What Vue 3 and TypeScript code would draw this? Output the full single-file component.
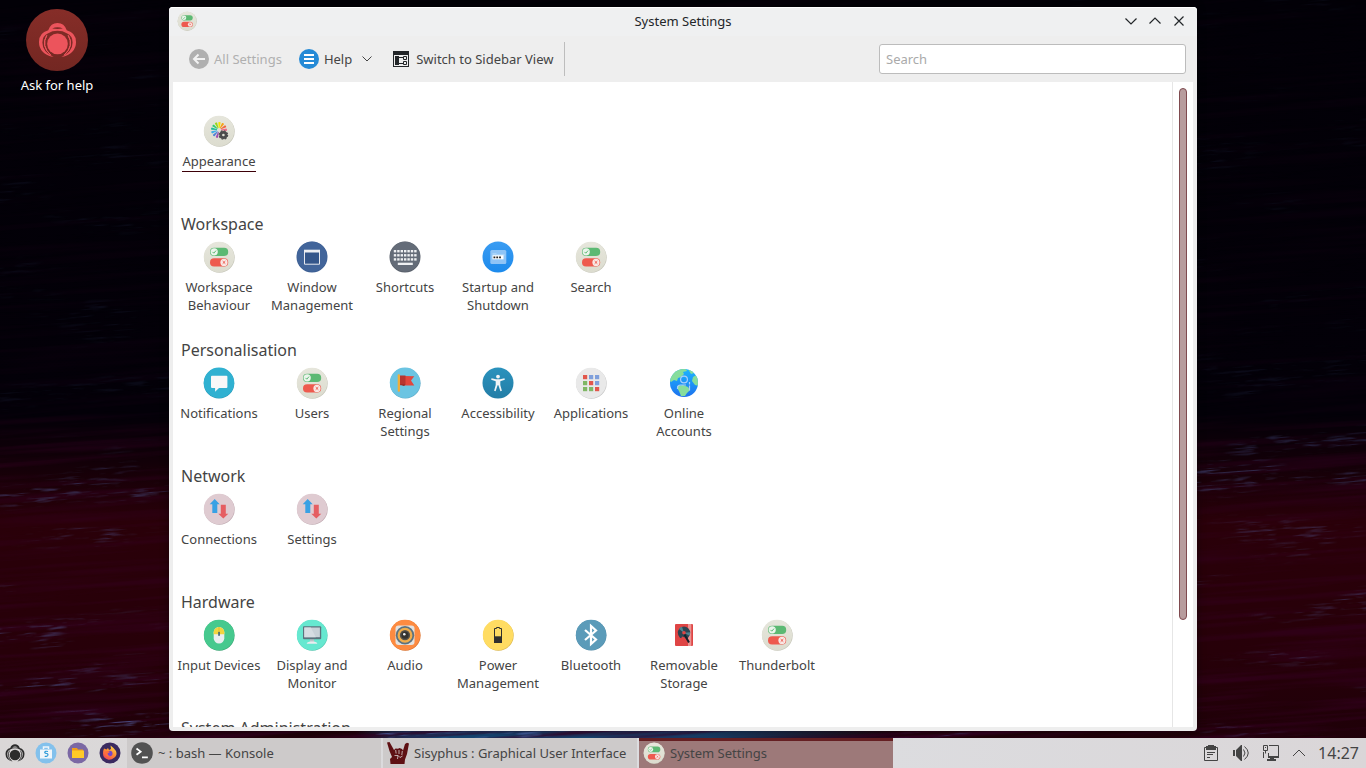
<script setup lang="ts">
interface Item {
  label: string
  icon: string
  current?: boolean
}
interface Section {
  title: string
  items: Item[]
}

const sections: Section[] = [
  { title: '', items: [{ label: 'Appearance', icon: 'appearance', current: true }] },
  {
    title: 'Workspace',
    items: [
      { label: 'Workspace Behaviour', icon: 'toggles' },
      { label: 'Window Management', icon: 'window' },
      { label: 'Shortcuts', icon: 'keyboard' },
      { label: 'Startup and Shutdown', icon: 'startup' },
      { label: 'Search', icon: 'toggles' },
    ],
  },
  {
    title: 'Personalisation',
    items: [
      { label: 'Notifications', icon: 'bubble' },
      { label: 'Users', icon: 'toggles' },
      { label: 'Regional Settings', icon: 'flag' },
      { label: 'Accessibility', icon: 'person' },
      { label: 'Applications', icon: 'apps' },
      { label: 'Online Accounts', icon: 'globe' },
    ],
  },
  {
    title: 'Network',
    items: [
      { label: 'Connections', icon: 'arrows' },
      { label: 'Settings', icon: 'arrows' },
    ],
  },
  {
    title: 'Hardware',
    items: [
      { label: 'Input Devices', icon: 'mouse' },
      { label: 'Display and Monitor', icon: 'monitor' },
      { label: 'Audio', icon: 'audio' },
      { label: 'Power Management', icon: 'battery' },
      { label: 'Bluetooth', icon: 'bluetooth' },
      { label: 'Removable Storage', icon: 'disk' },
      { label: 'Thunderbolt', icon: 'toggles' },
    ],
  },
  { title: 'System Administration', items: [] },
]

const tasks = [
  { label: '~ : bash — Konsole', icon: 'konsole', active: false },
  { label: 'Sisyphus : Graphical User Interface', icon: 'horns', active: false },
  { label: 'System Settings', icon: 'toggles', active: true },
]

const fan = ['#a04bb0', '#4f7fd8', '#3daee9', '#1abc9c', '#2ecc71', '#9bd61b', '#f4e400', '#f6a31b', '#f0663f', '#ee6a8a']
const keyColumns = [0, 1, 2, 3, 4, 5, 6]
const appColors = ['#e2574c', '#7f9fdb', '#7f9fdb', '#7fb765', '#e2574c', '#7f9fdb', '#7fb765', '#7fb765', '#e2574c']
</script>

<template>
  <svg class="defs" width="0" height="0" aria-hidden="true">
    <defs>
      <linearGradient id="g-beige" x1="0" y1="0" x2="0" y2="1"><stop offset="0" stop-color="#e6e6dc" /><stop offset="1" stop-color="#dcdccf" /></linearGradient>
      <linearGradient id="g-globe" x1="0" y1="0" x2="0" y2="1"><stop offset="0" stop-color="#1cb4ff" /><stop offset="1" stop-color="#1d72ee" /></linearGradient>
      <linearGradient id="g-startup" x1="0" y1="0" x2="0" y2="1"><stop offset="0" stop-color="#3a9cf2" /><stop offset="1" stop-color="#1c8aec" /></linearGradient>
      <linearGradient id="g-person" x1="0" y1="0" x2="0" y2="1"><stop offset="0" stop-color="#2a92bd" /><stop offset="1" stop-color="#237da6" /></linearGradient>
      <linearGradient id="g-fox" x1="0.8" y1="0" x2="0.2" y2="1"><stop offset="0" stop-color="#ffde4a" /><stop offset="0.5" stop-color="#ff8b32" /><stop offset="1" stop-color="#f2405c" /></linearGradient>
      <clipPath id="c-globe"><circle cx="16" cy="16" r="14" /></clipPath>
    </defs>

    <symbol id="i-toggles" viewBox="0 0 32 32">
      <circle cx="16.4" cy="16.5" r="15.3" fill="#c7c7ba" /><circle cx="16" cy="16" r="15.2" fill="url(#g-beige)" />
      <rect x="7" y="6.7" width="18.2" height="8.3" rx="4.1" fill="#5cb973" />
      <circle cx="11.2" cy="10.8" r="3.6" fill="#ecf5ec" /><path d="M9.5 10.9l1.3 1.3 2.2-2.6" fill="none" stroke="#5cb973" />
      <rect x="7" y="17.3" width="18.2" height="8.3" rx="4.1" fill="#ee5a4e" />
      <circle cx="21" cy="21.4" r="3.6" fill="#f9e8e5" /><path d="M19.7 20.1l2.6 2.6m0-2.6l-2.6 2.6" fill="none" stroke="#ee5a4e" />
    </symbol>

    <symbol id="i-appearance" viewBox="0 0 32 32">
      <circle cx="16.4" cy="16.5" r="15.3" fill="#c7c7ba" /><circle cx="16" cy="16" r="15.2" fill="url(#g-beige)" />
      <path v-for="(c, i) in fan" :key="i" d="M15.6 13L14.8 7.4Q16 6.4 17.2 7.4L16.4 13Z" :fill="c" :transform="`rotate(${i * 28 - 164} 16 15)`" />
      <circle cx="20.4" cy="20" r="2.7" fill="none" stroke="#4d4d4d" stroke-width="2.8" />
      <circle cx="20.4" cy="20" r="4.2" fill="none" stroke="#4d4d4d" stroke-width="1.2" stroke-dasharray="1.8 1.5" />
    </symbol>

    <symbol id="i-window" viewBox="0 0 32 32">
      <circle cx="16" cy="16" r="15.5" fill="#3d5f93" /><circle cx="16" cy="15.7" r="15" fill="#42659a" />
      <path d="M8.5 9.5h15v13.7h-15z" fill="#34568a" stroke="#e6e9ef" /><path d="M8 8.7h16v2.8H8z" fill="#eceef2" />
    </symbol>

    <symbol id="i-keyboard" viewBox="0 0 32 32">
      <circle cx="16" cy="16" r="15.5" fill="#59606b" /><circle cx="16" cy="15.7" r="15" fill="#646c78" />
      <g fill="#eef0f2">
        <g v-for="k in keyColumns" :key="k">
          <rect :x="4.8 + k * 3.4" y="9" width="2.4" height="2.4" /><rect :x="4.8 + k * 3.4" y="13.1" width="2.4" height="2.4" /><rect :x="4.8 + k * 3.4" y="17.2" width="2.4" height="2.4" />
        </g>
        <rect x="8.8" y="21.7" width="15" height="2.3" />
      </g>
    </symbol>

    <symbol id="i-startup" viewBox="0 0 32 32">
      <circle cx="16" cy="16" r="15.5" fill="url(#g-startup)" />
      <rect x="8.3" y="9" width="16" height="14" rx="1.5" fill="#8fc4f6" /><path d="M10.5 12h4v1h8v2h-12z" fill="#a9d3f8" />
      <rect x="10.5" y="14.3" width="11" height="4" fill="#fff" /><path d="M11.5 15.5h1.8v1.8h-1.8zm2.8 0h1.8v1.8h-1.8zm2.8 0h1.8v1.8h-1.8z" fill="#222" />
    </symbol>

    <symbol id="i-bubble" viewBox="0 0 32 32">
      <circle cx="16" cy="16.2" r="15.3" fill="#2795b3" /><circle cx="16" cy="15.8" r="15.2" fill="#30b1d1" />
      <path d="M9 8.7h14.4q1 0 1 1V20q0 1-1 1H16l-3.9 3.7V21H9q-1 0-1-1V9.7q0-1 1-1z" fill="#f8f8f8" />
    </symbol>

    <symbol id="i-flag" viewBox="0 0 32 32">
      <circle cx="16.3" cy="16.3" r="15.3" fill="#5eaac7" /><circle cx="16" cy="15.8" r="15.2" fill="#6bc4e2" />
      <path d="M15 9l10.300.2-3.300 4.300 3.300 5H15z" fill="#e2463d" /><path d="M11 8.6h5.500v8.900L15 18.300H11z" fill="#b8342f" />
      <path d="M16.5 17.5H11l4 1.500z" fill="#8d2723" /><rect x="8.7" y="7.3" width="2.3" height="17.500" rx="1" fill="#efae3a" />
    </symbol>

    <symbol id="i-person" viewBox="0 0 32 32">
      <circle cx="16" cy="16" r="15.5" fill="url(#g-person)" /><circle cx="16" cy="9.6" r="1.9" fill="#f1f4f6" />
      <path d="M9.5 11.300l4.500 1h4l4.500-1 .3 1.500-4.500 1.500v3.700l1.600 5.700-1.500.5-2-6h-.8l-2 6-1.500-.5 1.600-5.700v-3.700l-4.500-1.500z" fill="#f1f4f6" />
    </symbol>

    <symbol id="i-apps" viewBox="0 0 32 32">
      <circle cx="16.4" cy="16.5" r="15.3" fill="#c9c9c9" /><circle cx="16" cy="15.9" r="15.2" fill="#e9e9e9" />
      <rect v-for="(c, i) in appColors" :key="i" :x="8 + (i % 3) * 6" :y="8 + Math.floor(i / 3) * 6" width="4.2" height="4.2" :fill="c" />
    </symbol>

    <symbol id="i-globe" viewBox="0 0 32 32">
      <circle cx="16" cy="16" r="14" fill="url(#g-globe)" />
      <g clip-path="url(#c-globe)" fill="#86dd9c">
        <path d="M3 8l5-5 9-2 2 3-4 1 1 2-3 3-3 1-1 3-3-1-3 2-2-2zM9 19l6-1 5 2 2 3-3 3-2 3h-4l-2-5-2-3zM25 10l5-3 1 12-4-1-3-4zM20 2l4 1 2 3-3 1z" />
      </g>
      <g fill="none" stroke="#a9d0fb" stroke-width="1.2"><circle cx="16" cy="12.5" r="3.4" /><path d="M9.5 22v-1q0-3 3-3H18M21.5 15v2.5m0 1v5" /></g>
    </symbol>

    <symbol id="i-arrows" viewBox="0 0 32 32">
      <circle cx="16.4" cy="16.5" r="15.3" fill="#c2acb3" /><circle cx="16" cy="15.9" r="15.2" fill="#dfcbd1" />
      <path d="M11.700 6l5 5.200h-2.400V20h-5v-8.800H6.700z" fill="#39a1e4" /><path d="M17.800 11.700h5v9h2.500L20.300 25.500l-5-4.800h2.500z" fill="#e55e62" />
    </symbol>

    <symbol id="i-mouse" viewBox="0 0 32 32">
      <circle cx="16.3" cy="16.4" r="15.3" fill="#38a473" /><circle cx="16" cy="15.9" r="15.2" fill="#46c98e" />
      <rect x="10.7" y="8" width="10.6" height="16.500" rx="5.3" fill="#e9eef0" /><path d="M10.700 15.200v-2a5.300 5.300 0 0 1 10.600 0v2z" fill="#f1d53f" />
      <path d="M16 8v6" stroke="#d1b62e" stroke-width=".7" /><rect x="15.2" y="12.8" width="1.7" height="4.2" rx=".8" fill="#416676" />
    </symbol>

    <symbol id="i-monitor" viewBox="0 0 32 32">
      <circle cx="16.3" cy="16.4" r="15.3" fill="#53c7b0" /><circle cx="16" cy="15.9" r="15.2" fill="#66e8d0" />
      <path d="M14 19h4v4h-4z" fill="#b9c5ca" /><path d="M10.700 24.800q.5-2 4-2.200h2.600q3.500.2 4 2.200z" fill="#e9eef0" />
      <rect x="7" y="7.2" width="18.2" height="13" rx="1" fill="#5c737e" /><path d="M8.300 8.500h15.600v9.700H8.300z" fill="#c8d1d8" /><path d="M8.300 8.500h6.500l5 9.700H8.300z" fill="#d6dde3" />
    </symbol>

    <symbol id="i-audio" viewBox="0 0 32 32">
      <circle cx="16.3" cy="16.4" r="15.3" fill="#d9702c" /><circle cx="16" cy="15.9" r="15.2" fill="#fd8b41" />
      <rect x="6.5" y="6.5" width="19" height="19.5" rx="3" fill="#e4e2df" /><circle cx="16" cy="16.2" r="9.2" fill="#5b7280" />
      <circle cx="16" cy="16.2" r="6.3" fill="#55514a" stroke="#f0ad4c" stroke-width="2.3" /><circle cx="16" cy="16.2" r="3.6" fill="#35332f" /><circle cx="15.3" cy="15.2" r="1.3" fill="#eee" />
    </symbol>

    <symbol id="i-battery" viewBox="0 0 32 32">
      <circle cx="16.4" cy="16.5" r="15.3" fill="#dcb950" /><circle cx="16" cy="15.9" r="15.2" fill="#ffdc62" />
      <path d="M12.500 23.500V9.500h2v-1h3v1h2v14z" fill="none" stroke="#30302e" /><path d="M12 17.300h8V24h-8z" fill="#30302e" />
    </symbol>

    <symbol id="i-bluetooth" viewBox="0 0 32 32">
      <circle cx="16.2" cy="16.3" r="15.3" fill="#4a84a1" /><circle cx="16" cy="15.9" r="15.2" fill="#5b9bb9" />
      <path d="M10 11l11 9.500-5 4.500V7l5 4.500L10 21" fill="none" stroke="#fff" stroke-width="2.2" />
    </symbol>

    <symbol id="i-disk" viewBox="0 0 32 32">
      <rect x="7" y="5" width="18" height="22" rx="1" fill="#df4545" /><path d="M20 5h3.300v22H20z" fill="#eb9392" />
      <circle cx="16" cy="13.8" r="6.2" fill="#2e4552" /><path d="M16 13.800L11 10a6.200 6.200 0 0 1 3-2.200zM16 13.800l5.500 3a6.200 6.200 0 0 0 .6-3.500z" fill="#4f8490" />
      <circle cx="16" cy="13.8" r="1.8" fill="#df4545" /><path d="M14 17.500l3 1 2 3-3 .5-3-2z" fill="#df4545" /><path d="M16.500 15.500l4.500 8" stroke="#15202a" stroke-width="2" />
    </symbol>

    <symbol id="i-konsole" viewBox="0 0 32 32">
      <circle cx="16" cy="16" r="15.7" fill="#525252" /><path d="M8 9.500l6 4.500-6 4.500M16 22.500h8.500" fill="none" stroke="#fff" stroke-width="2.6" />
    </symbol>

    <symbol id="i-horns" viewBox="0 0 22 22">
      <path d="M0 .5L2.500 0 7 8 8.500 6.500 11 6.800 12.500 6 15 7 16 8.500 18 2 20 .8 22 1.500 20 12 18 17.500 17.500 22H3.500L3 17 5 15 2.500 9z" fill="#5e1013" />
      <path d="M7.500 13.500h3.500l2 2 2.500-1.500M8.700 8l.4 3.500M12 8v4M15.300 9l-.5 4M11 13.500l-.5 3.500" fill="none" stroke="#d6d0d0" stroke-width=".8" />
    </symbol>

    <symbol id="i-spiral" viewBox="0 0 40 36">
      <circle cx="20" cy="22" r="10.6" fill="currentColor" />
      <path d="M16 35.500Q1 32 1 20Q1 10.500 10.500 8Q13 .5 20 .5T29.500 8Q39 10.500 39 20Q39 32 24 35.500Q35.500 30 35.500 20.500Q35.500 13.500 29.500 11Q25.500 8.500 20 8.500T10.500 11Q4.500 13.500 4.500 20.500Q4.500 30 16 35.500Z" fill="currentColor" />
      <path d="M14.500 6.300Q20 3.700 25.500 6.300Q20 7.300 14.500 6.300Z" class="spiral-gap" />
      <path d="M13 33.500Q2.500 24 9 13.200Q3 24 13 33.500ZM27 33.500Q37.500 24 31 13.200Q37 24 27 33.500Z" fill="currentColor" stroke="currentColor" stroke-width="1" />
    </symbol>
  </svg>

  <div class="screen">
    <svg class="wallpaper" aria-hidden="true" width="100%" height="100%">
      <defs>
        <linearGradient id="w-base" x1="0" y1="0" x2="0" y2="1">
          <stop offset="0" stop-color="#020007" /><stop offset=".54" stop-color="#030008" /><stop offset=".6" stop-color="#120008" />
          <stop offset=".68" stop-color="#2a0009" /><stop offset=".85" stop-color="#270009" /><stop offset="1" stop-color="#1c0008" />
        </linearGradient>
        <linearGradient id="w-fade" x1="0" y1="0" x2="0" y2="1">
          <stop offset="0" stop-color="#fff" stop-opacity=".08" /><stop offset=".53" stop-color="#fff" stop-opacity=".1" /><stop offset=".6" stop-color="#fff" stop-opacity=".4" />
          <stop offset=".7" stop-color="#fff" stop-opacity=".3" /><stop offset=".88" stop-color="#fff" stop-opacity=".5" /><stop offset="1" stop-color="#fff" stop-opacity=".9" />
        </linearGradient>
        <linearGradient id="w-glow" x1="0" y1="0" x2="1" y2="0">
          <stop offset=".26" stop-color="#164572" stop-opacity="0" /><stop offset=".3" stop-color="#164572" /><stop offset=".5" stop-color="#164572" /><stop offset=".66" stop-color="#164572" stop-opacity="0" />
        </linearGradient>
        <mask id="w-mask"><rect width="100%" height="100%" fill="url(#w-fade)" /></mask>
        <filter id="w-streaks" x="0" y="0" width="100%" height="100%">
          <feTurbulence type="fractalNoise" baseFrequency="0.03 0.4" numOctaves="3" seed="8" result="fine" />
          <feColorMatrix in="fine" values="0 0 0 0 .1  0 0 0 0 .14  0 0 0 0 .45  5 0 0 0 -2.8" result="dashes" />
          <feTurbulence type="fractalNoise" baseFrequency="0.006 0.03" numOctaves="2" seed="21" />
          <feColorMatrix values="0 0 0 0 1  0 0 0 0 1  0 0 0 0 1  0 6 0 0 -3.2" result="patches" />
          <feComposite in="dashes" in2="patches" operator="in" />
        </filter>
        <filter id="w-shade" x="0" y="0" width="100%" height="100%">
          <feTurbulence type="fractalNoise" baseFrequency="0.004 0.14" numOctaves="3" seed="3" />
          <feColorMatrix values="0 0 0 0 .04  0 0 0 0 0  0 0 0 0 .02  0 3 0 0 -1.3" />
        </filter>
      </defs>
      <rect width="100%" height="100%" fill="url(#w-base)" />
      <rect y="94%" width="100%" height="6%" fill="url(#w-glow)" />
      <g mask="url(#w-mask)">
        <g transform="rotate(-4 683 560)">
          <rect x="-5%" y="-5%" width="110%" height="112%" filter="url(#w-shade)" />
          <rect x="-5%" y="-5%" width="110%" height="112%" filter="url(#w-streaks)" />
        </g>
      </g>
    </svg>

    <main class="desktop">
      <a class="launcher" href="#help">
        <span class="launcher-disc"><svg width="39" height="36"><use href="#i-spiral" /></svg></span>
        <span>Ask for help</span>
      </a>

      <section class="window" aria-label="System Settings">
        <header class="titlebar">
          <svg class="app-icon" width="20" height="20"><use href="#i-toggles" /></svg>
          <h1>System Settings</h1>
          <div class="controls">
            <button type="button" aria-label="Minimise"><svg viewBox="0 0 12 12"><path d="M.5 3.500L6 9l5.500-5.500" /></svg></button>
            <button type="button" aria-label="Maximise"><svg viewBox="0 0 12 12"><path d="M.5 8.500L6 3l5.500 5.500" /></svg></button>
            <button type="button" aria-label="Close"><svg viewBox="0 0 12 12"><path d="M1.500 1.500l9 9m0-9l-9 9" /></svg></button>
          </div>
        </header>

        <div class="toolbar">
          <button type="button" class="tool" disabled>
            <svg width="20" height="20"><circle cx="10" cy="10" r="10" fill="#b0b0b0" /><path d="M16 10H5M9.500 5.500L5 10l4.500 4.500" fill="none" stroke="#f2f2f2" stroke-width="2" /></svg>
            All Settings
          </button>
          <button type="button" class="tool help">
            <svg width="20" height="20"><circle cx="10" cy="10" r="10" fill="#258ad6" /><path d="M5 6h10M5 10h10M5 14h10" stroke="#fff" stroke-width="2" /></svg>
            Help
            <svg class="caret" width="10" height="6"><path d="M.5.5L5 5 9.500.5" fill="none" stroke="#444" /></svg>
          </button>
          <button type="button" class="tool sidebar">
            <svg width="16" height="16"><path d="M0 0h16v16H0z" fill="#232629" /><path d="M1 4h14v11H1z" fill="#eee" /><path d="M2 5h4v9H2z" fill="#232629" /><path d="M6 6.500h4M6 12.500h4M10.500 5.500h3v3h-3zM10.500 10.500h3v3h-3z" fill="none" stroke="#232629" /></svg>
            Switch to Sidebar View
          </button>
          <span class="divider"></span>
          <input class="search" type="text" placeholder="Search" aria-label="Search" />
        </div>

        <div class="body">
          <div class="content">
            <section v-for="(s, i) in sections" :key="i" class="group">
              <h2>{{ s.title }}</h2>
              <div class="items">
                <a v-for="it in s.items" :key="it.label" class="item" :class="{ current: it.current }" href="#module">
                  <svg width="32" height="32"><use :href="'#i-' + it.icon" /></svg>
                  <span>{{ it.label }}</span>
                </a>
              </div>
            </section>
          </div>
          <div class="scroll"><div class="thumb"></div></div>
        </div>
      </section>
    </main>

    <footer class="panel">
      <nav class="quick">
        <button type="button" aria-label="Menu"><svg class="menu-mark" width="20" height="18"><use href="#i-spiral" /></svg></button>
        <button type="button" aria-label="Software">
          <svg width="22" height="22" viewBox="0 0 22 22"><circle cx="11" cy="11" r="10.5" fill="#83c1ec" /><path d="M5 7.500h12v9H5z" fill="#f0f6fa" /><path d="M8.500 7V5h5v2" fill="none" stroke="#f0f6fa" stroke-width="1.5" /><path d="M13 9.500q-3-.8-3.300 1 .3 1 2 1 1.800.3 1 2-1 1.500-3 .7" fill="none" stroke="#2d9bd8" stroke-width="1.2" /></svg>
        </button>
        <button type="button" aria-label="Files">
          <svg width="22" height="22" viewBox="0 0 22 22"><circle cx="11" cy="11" r="10.5" fill="#7b68a4" /><path d="M5 6h5l1 1.500h5V15H5z" fill="#ef9d1b" /><path d="M5 8.500h12V16H5z" fill="#ffca28" /></svg>
        </button>
        <button type="button" aria-label="Browser">
          <svg width="22" height="22" viewBox="0 0 22 22"><circle cx="11" cy="11" r="10.5" fill="#3a2a60" /><path d="M5 6.500l2.500 1L9 6l1 2 2-1-.5-3.500 3 2.500 2.500 3q1.500 4-1.500 6.500t-6 2.200Q4 16.500 4 11.500 4 8.500 5 6.500z" fill="url(#g-fox)" /><circle cx="10.8" cy="11.5" r="2.7" fill="#7847c8" /><path d="M6 9.500q3-1 5 .5l-2.500 1.500q0 2 2.500 2.500-4 1.500-5-2z" fill="#ff6f3c" /></svg>
        </button>
      </nav>

      <div class="tasks">
        <button v-for="t in tasks" :key="t.label" type="button" class="task" :class="{ active: t.active }">
          <svg width="22" height="22"><use :href="'#i-' + t.icon" /></svg>
          <span>{{ t.label }}</span>
        </button>
      </div>

      <div class="tray">
        <button type="button" aria-label="Clipboard">
          <svg width="16" height="16"><path d="M1.500 2.500h13v13h-13z" fill="none" stroke="#444" /><path d="M3 1h2V0h6v1h2v4H3z" fill="#444" /><path d="M4 7.500h8M4 9.500h6M4 12.500h3" stroke="#444" /></svg>
        </button>
        <button type="button" aria-label="Volume">
          <svg width="16" height="16"><path d="M0 5h2v6H0zM3 5l5-5h1v16H8l-5-5z" fill="#444" /><path d="M10.500 4.500q3 3.500 0 7M11.500 1.500q7.500 6.500 0 13" fill="none" stroke="#444" /></svg>
        </button>
        <button type="button" aria-label="Network">
          <svg width="16" height="16"><path d="M.5.5h4v5h-4zM2.500 5.500v3M.5 7v6M6 .5h9.500v11H5.500V8" fill="none" stroke="#444" /><path d="M2 2h1v1H2zM5 11h11v2h-5v1h2v2H4v-2h3v-1H5z" fill="#444" /></svg>
        </button>
        <button type="button" aria-label="Show hidden icons" class="more">
          <svg width="14" height="16"><path d="M1 11l6-6 6 6" fill="none" stroke="#444" /></svg>
        </button>
        <time>14:27</time>
      </div>
    </footer>
  </div>
</template>

<style>
body {
  margin: 0;
}
</style>

<style scoped>
.defs {
  position: absolute;
}
.screen {
  position: relative;
  display: grid;
  grid-template-rows: minmax(0, 1fr) auto;
  height: 100vh;
  overflow: hidden;
  background: #050007;
  color: #444;
  font: 13px/18px "Noto Sans", sans-serif;
}
.wallpaper {
  position: absolute;
  inset: 0;
}
button {
  display: flex;
  align-items: center;
  margin: 0;
  padding: 0;
  border: 0;
  background: none;
  color: inherit;
  font: inherit;
}
a {
  color: inherit;
  text-decoration: none;
}
h1,
h2 {
  margin: 0;
  font-weight: 400;
}
svg {
  flex: none;
}
.spiral-gap {
  fill: var(--gap);
}

.desktop {
  position: relative;
  display: grid;
  grid-template-columns: 169px minmax(0, 1fr) 169px;
  min-height: 0;
  padding: 7px 0;
}
.launcher {
  display: flex;
  flex-direction: column;
  align-items: center;
  align-self: start;
  gap: 5px;
  width: 114px;
  padding-top: 2px;
  color: #fff;
}
.launcher-disc {
  --gap: #7d2a25;
  display: grid;
  place-items: center;
  width: 62px;
  height: 62px;
  border-radius: 50%;
  background: linear-gradient(#862d28, #732722);
  color: #ec545c;
}

.window {
  display: flex;
  flex-direction: column;
  min-height: 0;
  border-radius: 4px;
  background: #eee;
  box-shadow: 0 0 8px rgba(0, 0, 0, 0.4);
}
.titlebar {
  display: grid;
  grid-template-columns: 1fr auto 1fr;
  align-items: center;
  height: 29px;
  padding: 0 8px;
  box-sizing: border-box;
  padding-bottom: 1px;
  border-radius: 4px 4px 0 0;
  background: #eff0f1;
  box-shadow: inset 0 1px #fff;
}
.titlebar h1 {
  color: #232629;
  font-size: 13px;
}
.controls {
  display: flex;
  justify-content: flex-end;
  margin-right: -2px;
}
.controls button {
  justify-content: center;
  width: 24px;
  height: 24px;
}
.controls svg {
  width: 12px;
  height: 12px;
  fill: none;
  stroke: #232629;
  stroke-width: 1.2;
}

.toolbar {
  display: flex;
  align-items: center;
  height: 46px;
  padding: 0 11px 0 20px;
}
.tool {
  gap: 5px;
}
.tool:disabled {
  color: #b0b0b0;
}
.help {
  margin-left: 17px;
}
.caret {
  margin-left: 5px;
}
.sidebar {
  gap: 7px;
  margin-left: 21px;
}
.divider {
  width: 1px;
  height: 34px;
  margin-left: 10px;
  background: #bdbdbd;
}
.search {
  box-sizing: border-box;
  width: 307px;
  height: 30px;
  margin-left: auto;
  padding: 0 6px;
  border: 1px solid #bcbcbc;
  border-radius: 3px;
  background: #fff;
  color: #444;
  font: inherit;
}
.search::placeholder {
  color: #aaa;
  opacity: 1;
}

.body {
  display: flex;
  flex: 1;
  min-height: 0;
  margin: 0 4px 4px;
  background: #fff;
}
.content {
  flex: 1;
  min-width: 0;
  padding-top: 4px;
  overflow: hidden;
}
.group {
  min-height: 126px;
}
.group h2 {
  height: 24px;
  padding-left: 8px;
  font-size: 16px;
  line-height: 24px;
}
.items {
  display: flex;
  padding-top: 5px;
}
.item {
  box-sizing: border-box;
  display: flex;
  flex-direction: column;
  align-items: center;
  gap: 5px;
  width: 93px;
  padding-right: 1px;
  text-align: center;
}
.item span {
  border-bottom: 1px solid transparent;
}
.current span {
  padding: 0 1px 1px;
  border-color: #3d0008;
}
.scroll {
  box-sizing: border-box;
  width: 21px;
  padding: 6px;
  border-left: 1px solid #e6e6e6;
}
.thumb {
  box-sizing: border-box;
  width: 8px;
  height: 84%;
  border: 1px solid #7f4a4f;
  border-radius: 4px;
  background: #b79c9d;
}

.panel {
  position: relative;
  display: flex;
  height: 30px;
  background: linear-gradient(90deg, #dad7d7, #dcdcdf 40%, #dcdcdf 65%, #dad6d8);
}
.quick {
  --gap: #dad7d7;
  box-sizing: border-box;
  display: flex;
  align-items: center;
  gap: 10px;
  width: 127px;
  padding-left: 5px;
}
.menu-mark {
  color: #2c2c2c;
}
.tasks {
  display: flex;
  flex: 0 1 766px;
  gap: 2px;
}
.task {
  flex: 1;
  min-width: 0;
  gap: 5px;
  padding-left: 4px;
  background: #cdcaca;
}
.task.active {
  background: #9d7979;
  box-shadow: inset 0 3px #651f22;
}
.tray {
  display: flex;
  align-items: center;
  gap: 14px;
  margin-left: auto;
  padding-right: 7px;
}
.more {
  margin-left: -1px;
}
.tray time {
  margin-left: -2px;
  font-size: 16px;
}
</style>
